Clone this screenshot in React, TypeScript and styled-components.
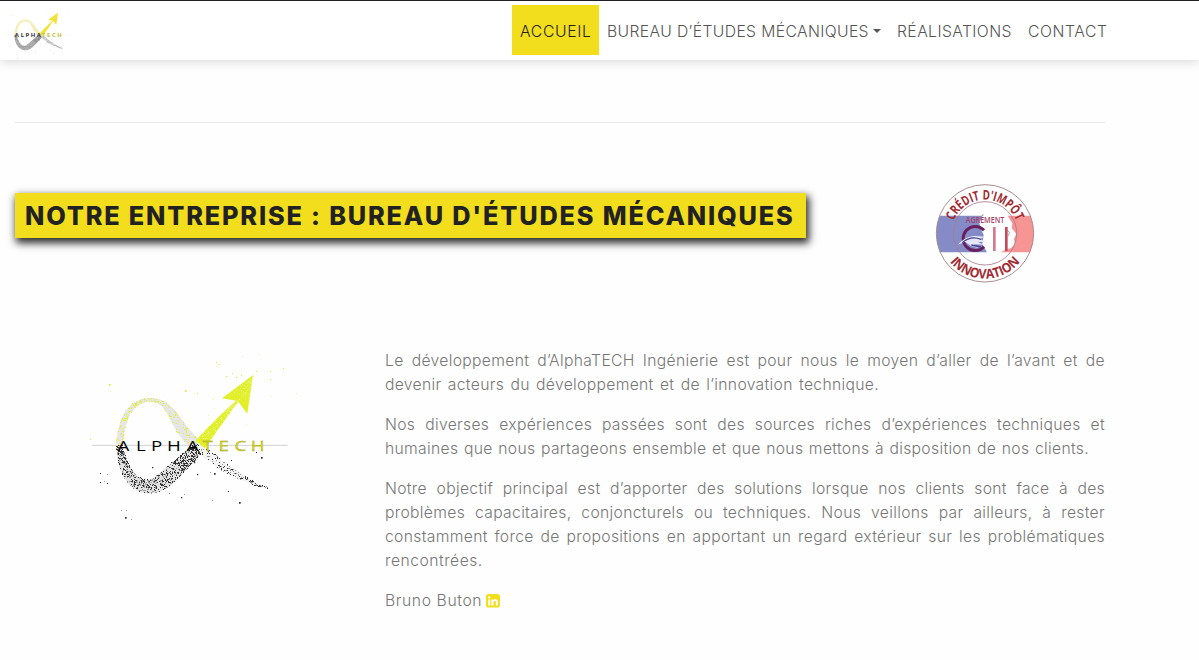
import React from "react";
import styled, { createGlobalStyle } from "styled-components";

const Global = createGlobalStyle`
  *, *::before, *::after { box-sizing: border-box; }
  body { margin: 0; background: #fefefe; color: #777; font: 400 15.7px/24px Inter, "Open Sans", sans-serif; overflow: hidden; }
`;

const Header = styled.header`
  display: flex;
  align-items: flex-start;
  justify-content: space-between;
  height: 60px;
  padding: 0 84px 0 3px;
  border-top: 1px solid #212025;
  background: #fff;
  box-shadow: 0 2px 10px rgba(0, 0, 0, 0.15);
`;
const Brand = styled.a`
  display: flex;
  height: 57px;
  margin-top: 2px;
`;
const Nav = styled.nav`
  display: flex;
  padding-top: 4px;
`;
const NavLink = styled.a<{ $w: number; $ls?: number; $active?: boolean }>`
  display: flex;
  align-items: center;
  width: ${(p) => p.$w}px;
  height: 50px;
  padding: 3px 8px 0;
  white-space: nowrap;
  font-size: 15.7px;
  font-weight: 360;
  letter-spacing: ${(p) => p.$ls ?? 0}px;
  color: ${(p) => (p.$active ? "#222" : "#555")};
  background: ${(p) => (p.$active ? "#f2de1d" : "transparent")};
`;
const Caret = styled.span`
  margin: -2px 0 0 4px;
  border: 4.5px solid transparent;
  border-top-color: #555;
  border-bottom: 0;
`;
const Main = styled.main`
  width: 1120px;
  padding: 62px 15px 0;
`;
const Rule = styled.hr`
  margin: 0;
  border: 0;
  border-top: 1px solid #ebebeb;
`;
const Intro = styled.section`
  display: flex;
  justify-content: space-between;
  align-items: flex-start;
  padding: 53px 60px 0 0;
`;
const Title = styled.h1`
  width: 791px;
  height: 45px;
  margin: 17px 0 0;
  padding: 1px 10px 0;
  background: #f2de1d;
  box-shadow: 2px 4px 8px 1px rgba(0, 0, 0, 0.85);
  color: #222;
  font-size: 25.3px;
  font-weight: 820;
  line-height: 44px;
  letter-spacing: 1.82px;
  white-space: nowrap;
`;
const About = styled.section`
  display: flex;
  align-items: flex-start;
  padding: 54px 0 0 65px;
`;
const Copy = styled.div`
  width: 720px;
  margin: 4px 0 0 85px;
`;
const Paragraph = styled.p`
  margin: 0 0 16px;
`;
const Line = styled.span<{ $w?: number; $ls?: number }>`
  display: block;
  width: ${(p) => p.$w ?? 720}px;
  font-weight: 360;
  letter-spacing: ${(p) => p.$ls ?? 0.32}px;
  white-space: nowrap;
  text-align: justify;
  text-align-last: justify;
`;
const Author = styled.div`
  display: flex;
  align-items: center;
  gap: 4px;
`;

type Node = [number, number, number];

function randomizer(seed: number) {
  let s = seed;
  return () => {
    s = (s * 16807) % 2147483647;
    return s / 2147483647;
  };
}

function at(nodes: Node[], t: number) {
  const f = Math.min(t * (nodes.length - 1), nodes.length - 1.0001);
  const i = Math.floor(f);
  const k = f - i;
  const a = nodes[i];
  const b = nodes[i + 1];
  const d = Math.hypot(b[0] - a[0], b[1] - a[1]);
  return {
    x: a[0] + (b[0] - a[0]) * k,
    y: a[1] + (b[1] - a[1]) * k,
    w: a[2] + (b[2] - a[2]) * k,
    nx: -(b[1] - a[1]) / d,
    ny: (b[0] - a[0]) / d,
  };
}

function ribbon(nodes: Node[]) {
  const left: string[] = [];
  const right: string[] = [];
  for (let i = 0; i <= 60; i++) {
    const p = at(nodes, i / 60);
    left.push(`${(p.x + (p.nx * p.w) / 2).toFixed(1)},${(p.y + (p.ny * p.w) / 2).toFixed(1)}`);
    right.unshift(`${(p.x - (p.nx * p.w) / 2).toFixed(1)},${(p.y - (p.ny * p.w) / 2).toFixed(1)}`);
  }
  return left.concat(right).join(" ");
}

function speck(x: number, y: number, s = 3) {
  return `M${Math.floor(x / 3) * 3} ${Math.floor(y / 3) * 3}h${s}v${s}h-${s}z`;
}

function scatter(nodes: Node[], count: number, seed: number, from = 0, to = 1) {
  const r = randomizer(seed);
  let d = "";
  for (let i = 0; i < count; i++) {
    const p = at(nodes, from + r() * (to - from));
    const o = (r() - 0.5) * p.w;
    d += speck(p.x + p.nx * o, p.y + p.ny * o);
  }
  return d;
}

const upper: Node[] = [
  [119, 298, 22], [122, 265, 20], [131, 230, 19], [145, 200, 17], [163, 180, 14], [185, 168, 12], [210, 164, 11],
  [235, 168, 13], [256, 181, 18], [274, 202, 25], [290, 228, 31], [308, 256, 34], [330, 282, 36], [356, 304, 30],
];
const lower: Node[] = [
  [117, 302, 18], [123, 330, 24], [130, 358, 29], [143, 385, 33], [160, 406, 36], [182, 421, 39], [208, 426, 42],
  [232, 419, 46], [256, 403, 50], [280, 381, 50], [304, 358, 45], [328, 336, 42], [352, 312, 34],
];
const tail: Node[] = [
  [350, 300, 26], [375, 322, 28], [400, 340, 28], [425, 362, 26], [450, 377, 24], [475, 391, 19], [500, 404, 14], [530, 419, 8], [566, 429, 2],
];
const shaft: Node[] = [
  [360, 298, 36], [380, 275, 32], [400, 250, 27], [425, 221, 21], [450, 192, 13], [477, 163, 5],
];
const head: Node[] = [
  [512, 105, 10], [496, 130, 38], [480, 155, 68],
];
const yellowSpecks: [number, number, number][] = [
  [87, 119, 5], [315, 137, 5], [352, 144, 3], [408, 52, 3], [417, 58, 3], [487, 34, 2], [535, 28, 2], [438, 94, 3], [457, 86, 3],
  [470, 97, 3], [483, 91, 3], [528, 78, 3], [571, 78, 3], [571, 104, 3], [611, 70, 3], [574, 154, 2], [648, 146, 2], [401, 162, 2],
  [32, 284, 3], [498, 238, 2], [402, 190, 2], [384, 212, 2], [92, 140, 2],
];
const darkSpecks: [number, number, number][] = [
  [62, 385, 3], [62, 411, 3], [82, 389, 2], [82, 415, 3], [72, 409, 2], [217, 368, 4], [342, 353, 4], [353, 389, 4], [404, 386, 5],
  [390, 383, 2], [545, 337, 5], [529, 321, 3], [479, 473, 5], [444, 438, 3], [396, 466, 2], [304, 458, 4], [312, 448, 2], [125, 495, 2],
  [138, 495, 2], [136, 517, 5], [155, 522, 2], [268, 444, 2], [453, 346, 3],
];

function Logo({ width, small }: { width: number; small?: boolean }) {
  const lime = small ? "#f2e02c" : "#e1f02a";
  const ink = small ? "#777" : "#333";
  return (
    <svg width={width} height={(width * 180) / 220} viewBox="0 0 660 540" role="img" aria-label="AlphaTECH">
      <path d="M36 301H623" stroke={small ? "#ddd" : "#bbb"} strokeWidth="2" />
      <polygon points={ribbon(upper)} fill={small ? "#f3f0cf" : "#e6e6e4"} />
      <polygon points={ribbon(lower)} fill={small ? "#bbb" : "#e2e2e2"} />
      <polygon points={ribbon(tail)} fill={small ? "#ddd" : "#f2f2f2"} />
      <path d={scatter(upper, 180, 41)} fill={lime} />
      <path d={scatter(lower, small ? 350 : 480, 7)} fill={ink} />
      <path d={scatter(lower, 180, 97, 0.8, 1)} fill={ink} />
      <path d={scatter(lower, 300, 55)} fill="#999" />
      <path d={scatter(tail, 100, 19)} fill={ink} />
      <path d={scatter(tail, 70, 23)} fill="#999" />
      <polygon points={ribbon(shaft)} fill={lime} />
      <polygon points="519,90 426,160 473,168 502,206" fill={lime} />
      <path d={scatter(shaft, 90, 3)} fill={small ? "#f5e860" : "#e9f27a"} />
      <path d={scatter(head, 60, 5)} fill={small ? "#f5e860" : "#e8f267"} />
      <path d={yellowSpecks.map(([x, y, s]) => speck(x, y, s)).join("")} fill={lime} />
      <path d={darkSpecks.map(([x, y, s]) => speck(x, y, s)).join("")} fill={ink} />
      <g fontFamily="Open Sans, sans-serif" fontSize="46" fontWeight={small ? 700 : 480} textAnchor="middle">
        {"ALPHATECH".split("").map((c, i) => (
          <text
            key={i}
            transform={`translate(${[130, 183, 230, 282, 338, 383, 431, 481, 533][i]} 317) scale(1.22 1)`}
            fill={i < 5 ? (small ? "#333" : "#000") : small ? "#c9bd35" : "#d8dc14"}
            stroke={i < 5 ? "none" : "#8d9120"}
            strokeWidth={small ? 0 : 0.8}
          >
            {c}
          </text>
        ))}
      </g>
    </svg>
  );
}

function InnovationBadge() {
  return (
    <svg width="120" height="115" viewBox="0 0 360 345" role="img" aria-label="Agrément CII">
      <defs>
        <clipPath id="disc"><circle cx="180" cy="172" r="146" /></clipPath>
        <path id="top" d="M79 172A101 101 0 0 1 281 172" />
        <path id="bottom" d="M44 172A136 136 0 0 0 316 172" />
      </defs>
      <circle cx="180" cy="172" r="146" fill="#fff" />
      <g clipPath="url(#disc)">
        <path d="M30 119H172L163 142L168 160L176 176L172 205L186 229H30Z" fill="#858bc7" />
        <path d="M248 119H330V229H227L240 222L258 216L270 204L267 188L274 174L260 157L262 142Z" fill="#f79595" />
      </g>
      <circle cx="180" cy="172" r="146" fill="none" stroke="#a98c8f" strokeWidth="3" />
      <circle cx="180" cy="172" r="95" fill="none" stroke="#a9788b" strokeWidth="2.5" />
      <path d="M177 163A36 36 0 1 0 177 212" fill="none" stroke="#69205f" strokeWidth="9" />
      <path d="M99 206C120 181 144 176 177 182L165 190L184 197L159 198L176 206L147 205L160 216L137 209L120 197Z" fill="#e3e7f8" />
      <path d="M112 200C128 186 148 182 168 190M139 207L168 213" fill="none" stroke="#4d3f92" strokeWidth="4" />
      <path d="M208 153V225" stroke="#d07a8c" strokeWidth="8" />
      <path d="M244 153V225" stroke="#c9475c" strokeWidth="8" />
      <path d="M246 163L254 169L249 180" fill="none" stroke="#777" strokeWidth="2" />
      <text x="122" y="142" textLength="116" lengthAdjust="spacingAndGlyphs" fontFamily="Open Sans, sans-serif" fontSize="24" fontWeight="600" fill="#a4466a">AGRÉMENT</text>
      <g fontFamily="Open Sans, sans-serif" fontWeight="750" fill="#a12b32" textAnchor="middle">
        <text fontSize="40" textLength="240" lengthAdjust="spacingAndGlyphs"><textPath href="#top" startOffset="50%">CRÉDIT D'IMPÔT</textPath></text>
        <text fontSize="40" textLength="242" lengthAdjust="spacingAndGlyphs"><textPath href="#bottom" startOffset="50%">INNOVATION</textPath></text>
      </g>
    </svg>
  );
}

function LinkedIn() {
  return (
    <svg width="14" height="14" viewBox="0 0 14 14" role="img" aria-label="LinkedIn">
      <rect width="14" height="13.5" rx="2.6" fill="#f2de1d" />
      <circle cx="3.2" cy="3.4" r="1.15" fill="#fff" />
      <path d="M2.2 5.4h2v6.2h-2zM5.4 5.4h2v.9c.4-.7 1-1.1 2-1.1 1.6 0 2.5 1 2.5 2.8v3.6h-2.1V8.3c0-.9-.4-1.4-1.1-1.4s-1.2.5-1.2 1.4v3.3H5.4z" fill="#fff" />
    </svg>
  );
}

export default function App() {
  return (
    <>
      <Global />
      <Header>
        <Brand><Logo width={70} small /></Brand>
        <Nav>
          <NavLink $w={87} $ls={0.68} $active>ACCUEIL</NavLink>
          <NavLink $w={290} $ls={0.38}>BUREAU D’ÉTUDES MÉCANIQUES<Caret /></NavLink>
          <NavLink $w={131} $ls={0.42}>RÉALISATIONS</NavLink>
          <NavLink $w={95} $ls={0.6}>CONTACT</NavLink>
        </Nav>
      </Header>
      <Main>
        <Rule />
        <Intro>
          <Title>NOTRE ENTREPRISE : BUREAU D'ÉTUDES MÉCANIQUES</Title>
          <InnovationBadge />
        </Intro>
        <About>
          <Logo width={220} />
          <Copy>
            <Paragraph>
              <Line>Le développement d’AlphaTECH Ingénierie est pour nous le moyen d’aller de l’avant et de</Line>
              <Line $w={494}>devenir acteurs du développement et de l’innovation technique.</Line>
            </Paragraph>
            <Paragraph>
              <Line>Nos diverses expériences passées sont des sources riches d’expériences techniques et</Line>
              <Line $w={704}>humaines que nous partageons ensemble et que nous mettons à disposition de nos clients.</Line>
            </Paragraph>
            <Paragraph>
              <Line>Notre objectif principal est d’apporter des solutions lorsque nos clients sont face à des</Line>
              <Line>problèmes capacitaires, conjoncturels ou techniques. Nous veillons par ailleurs, à rester</Line>
              <Line>constamment force de propositions en apportant un regard extérieur sur les problématiques</Line>
              <Line $w={98} $ls={0.5}>rencontrées.</Line>
            </Paragraph>
            <Author><Line $w={97} $ls={0.6}>Bruno Buton</Line><LinkedIn /></Author>
          </Copy>
        </About>
      </Main>
    </>
  );
}
